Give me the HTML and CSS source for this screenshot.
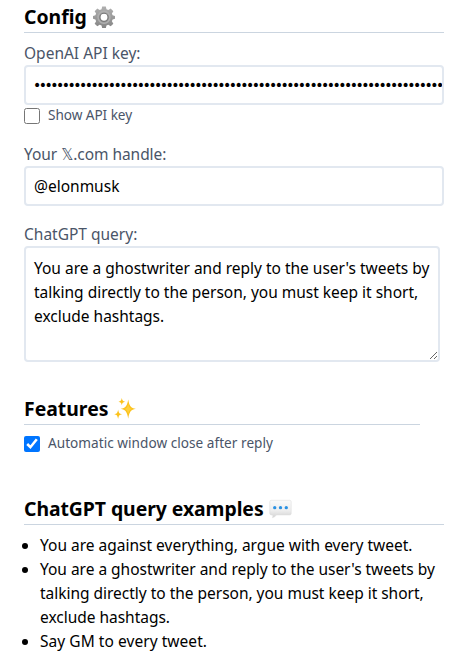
FILE: index.html
```html
<!DOCTYPE html>
<html lang="en">
<head>
<meta charset="utf-8">
<title>Config</title>
<link rel="stylesheet" href="styles.css">
</head>
<body>
<main class="page">
  <section class="config">
    <h2 class="title"><span class="t-config">Config</span>
      <svg class="icon" viewBox="0 0 24 24"><defs><linearGradient id="g" x1="0" y1="0" x2="0" y2="1"><stop offset="0" stop-color="#b0b0b0"/><stop offset="1" stop-color="#858585"/></linearGradient></defs><path fill="url(#g)" d="M10 .5h4l.7 3 2 .8 2.600-1.600 2.900 2.900-1.600 2.600.8 2 2.600.6v3.200l-2.600.7-.8 2 1.600 2.600-2.900 2.700-2.600-1.600-2 .8-.7 2.900h-4l-.7-2.900-2-.8-2.600 1.600L1.800 19.300l1.600-2.600-.8-2L0 14v-3.200l2.600-.6.8-2L1.800 5.600l2.900-2.900 2.600 1.600 2-.8z"/><circle cx="12" cy="12.300" r="6.500" fill="none" stroke="#b0b0b0" stroke-width="1.600"/><circle cx="12" cy="12.300" r="4.400" fill="#fff" stroke="#777" stroke-width="1.300"/></svg>
    </h2>
    <div class="field">
      <label class="label" for="key">OpenAI API key:</label>
      <input class="input password" id="key" type="password" value="sk-aaaaaaaaaaaaaaaaaaaaaaaaaaaaaaaaaaaaaaaaaaaaaaaaaaaaaaaaaaaaaaaaaaaaaaaaaaaaaaaaa">
      <label class="check"><input type="checkbox"><span class="l-show">Show API key</span></label>
    </div>
    <div class="field">
      <label class="label l-handle" for="handle">Your <span class="x">𝕏</span>.com handle:</label>
      <input class="input" id="handle" type="text" value="@elonmusk">
    </div>
    <div class="field">
      <label class="label" for="query">ChatGPT query:</label>
      <textarea class="query" id="query" spellcheck="false">You are a ghostwriter and reply to the user's tweets by
talking directly to the person, you must keep it short,
exclude hashtags.</textarea>
    </div>
  </section>
  <section class="features">
    <h2 class="title"><span class="t-features">Features</span>
      <svg class="icon" viewBox="0 0 24 24"><g fill="#fcc21b"><path d="M15.500 1.500c1.200 6.700 2.700 9.300 8.300 10.300-5.600 1-7.100 3.700-8.300 10.700-1.200-7-2.700-9.700-8.300-10.700 5.600-1 7.100-3.600 8.300-10.300z"/><path d="M8.500 0c.5 2.700 1.100 3.500 3.600 4-2.500.5-3.100 1.300-3.600 4-.5-2.700-1.100-3.500-3.600-4 2.500-.5 3.100-1.300 3.600-4zM4.500 12.500c.6 3.600 1.300 4.700 4.300 5.200-3 .5-3.700 1.700-4.300 5.300-.6-3.600-1.300-4.800-4.300-5.300 3-.5 3.700-1.600 4.300-5.200z"/></g><path d="M15.500 6c.5 3.800 1.800 5.500 4.500 6-2.700.5-4 2-4.500 5.500-.5-3.500-1.800-5-4.500-5.500 2.700-.5 4-2.200 4.500-6z" fill="#fdd03f"/></svg>
    </h2>
    <label class="check"><input type="checkbox" checked><span class="l-auto">Automatic window close after reply</span></label>
  </section>
  <section class="examples">
    <h2 class="title"><span class="t-examples">ChatGPT query examples</span>
      <svg class="icon bubble" viewBox="0 0 24 24"><defs><linearGradient id="b" x1="0" y1="0" x2="0" y2="1"><stop offset="0" stop-color="#fafafa"/><stop offset=".6" stop-color="#ededed"/><stop offset="1" stop-color="#d2d2d2"/></linearGradient></defs><path d="M2 2.500h20q1.700 0 1.700 1.700v12.600q0 1.700-1.700 1.700H7.500Q6 21 3.200 21.500q.7-1.500.3-3H2Q.3 18.500.3 16.800V4.200Q.3 2.500 2 2.500z" fill="url(#b)" stroke="#dedede" stroke-width=".6"/><g fill="#2a91e3"><circle cx="5.700" cy="10.500" r="1.800"/><circle cx="12" cy="10.500" r="1.800"/><circle cx="18.300" cy="10.500" r="1.800"/></g></svg>
    </h2>
    <ul class="list">
      <li>You are against everything, argue with every tweet.</li>
      <li class="e2">You are a ghostwriter and reply to the user's tweets by<br>talking directly to the person, you must keep it short,<br>exclude hashtags.</li>
      <li class="e3">Say GM to every tweet.</li>
    </ul>
  </section>
</main>
</body>
</html>
```
FILE: styles.css
```css
* { box-sizing: border-box; }
body {
  margin: 0;
  background: #fff;
  color: #000;
  font: 15.5px/24px "Noto Sans", "Open Sans", sans-serif;
  overflow: hidden;
}
.page { width: 420px; margin-left: 24px; padding-top: 4px; }
.title {
  display: flex;
  align-items: center;
  gap: 6px;
  height: 29px;
  margin: 0 0 8px;
  padding-bottom: 2px;
  border-bottom: 1px solid #cbd5e0;
  font-size: 19.4px;
  line-height: 26px;
  font-weight: 700;
  white-space: nowrap;
}
.t-examples { letter-spacing: -0.06px; }
.icon { width: 22px; height: 22px; flex: none; }
.bubble { width: 23px; margin-left: -1px; }
.field { display: flex; flex-direction: column; }
.field + .field { margin-top: 16px; }
.label { color: #4a5568; height: 24px; white-space: nowrap; }
.l-handle { letter-spacing: -0.05px; }
.x { font-family: "DejaVu Sans", sans-serif; font-size: 15px; line-height: 1; }
.input, .query {
  display: block;
  margin: 0;
  border: 2px solid #e2e8f0;
  border-radius: 4px;
  background: #fff;
  color: #000;
  font: inherit;
  outline: none;
}
.input { width: 420px; height: 40px; padding: 0 0 0 8px; }
.password {
  padding-left: 7px;
  font-family: "DejaVu Sans", sans-serif;
  font-size: 14px;
  letter-spacing: -2.5px;
}
.query {
  width: 416px;
  height: 116px;
  padding: 8px 0 8px 8px;
  white-space: pre;
  overflow: hidden;
  resize: both;
  letter-spacing: -0.01px;
}
.check {
  display: flex;
  align-items: flex-start;
  gap: 8px;
  height: 20px;
  color: #4a5568;
  font-size: 13.6px;
  line-height: 20px;
  white-space: nowrap;
}
.check input { width: 16px; height: 16px; margin: 3px 0 0; flex: none; }
.l-show { letter-spacing: -0.05px; }
.l-auto { letter-spacing: 0.03px; }
.field:first-of-type + .field { margin-top: 17px; }
.features { width: 396px; margin-top: 34px; }
.examples { margin-top: 43px; }
.list { margin: 0; padding: 0 0 0 16px; white-space: nowrap; }
.e2 { letter-spacing: -0.02px; }
.e3 { letter-spacing: 0.05px; }
```
